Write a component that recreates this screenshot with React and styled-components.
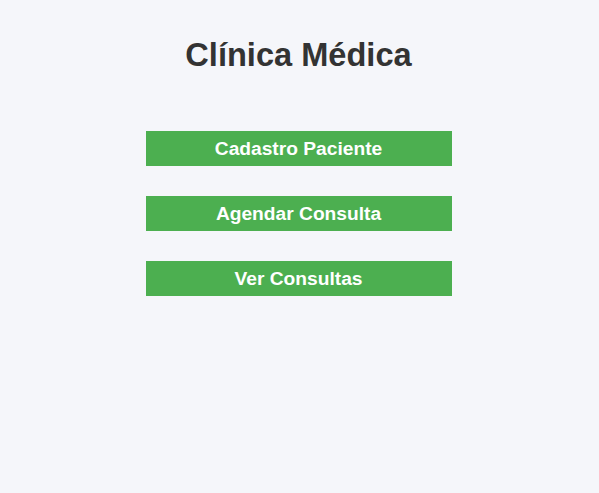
import React from "react";
import styled, { createGlobalStyle } from "styled-components";

const Global = createGlobalStyle`
  html, body { margin: 0; padding: 0; background: #f5f6fa; }
  body { font-family: "Liberation Sans", Arial, sans-serif; }
`;

const Page = styled.div`
  display: flex;
  flex-direction: column;
  align-items: center;
  padding-top: 36px;
  padding-right: 2px;
`;

const Title = styled.h1`
  margin: 0 0 57px;
  font-size: 32.6px;
  font-weight: bold;
  color: #333333;
  line-height: 38px;
`;

const Menu = styled.div`
  display: flex;
  flex-direction: column;
  gap: 30px;
`;

const Button = styled.button`
  width: 306px;
  height: 35px;
  border: none;
  background: #4caf50;
  color: #ffffff;
  font-family: "Liberation Sans", Arial, sans-serif;
  font-size: 19.2px;
  font-weight: bold;
  cursor: pointer;
  padding: 0;
`;

export default function App() {
  return (
    <>
      <Global />
      <Page>
        <Title>Clínica Médica</Title>
        <Menu>
          <Button>Cadastro Paciente</Button>
          <Button>Agendar Consulta</Button>
          <Button>Ver Consultas</Button>
        </Menu>
      </Page>
    </>
  );
}
